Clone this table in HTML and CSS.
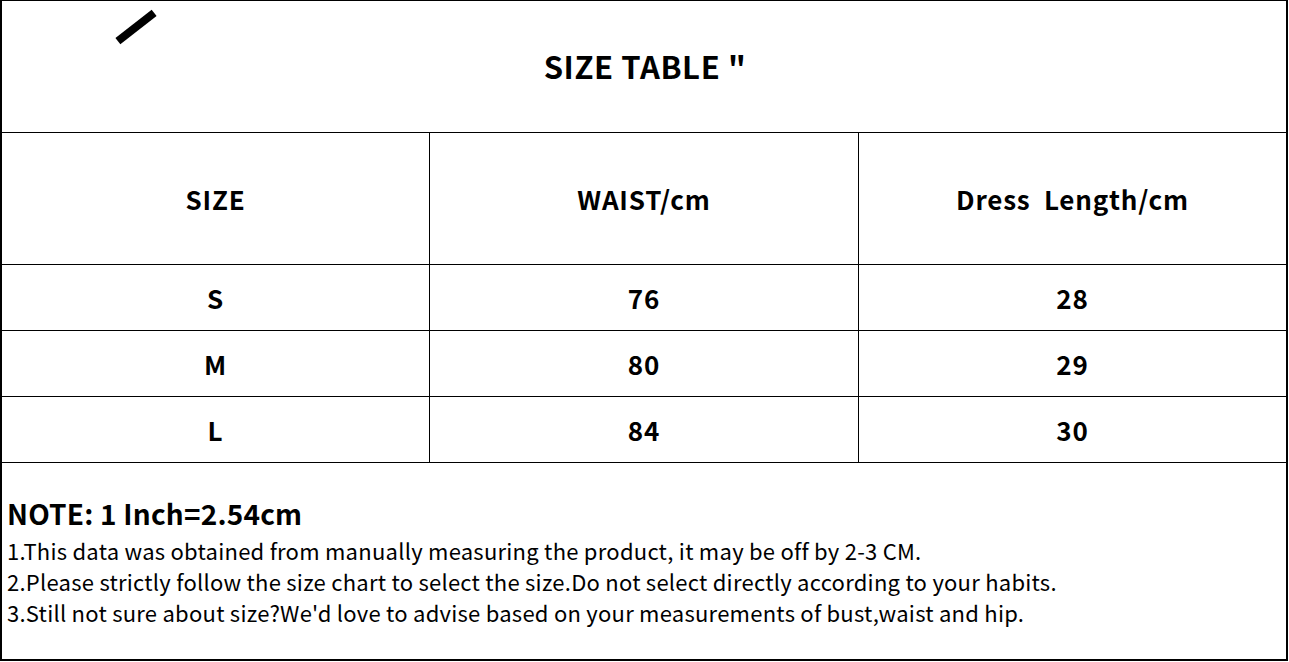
FILE: index.html
```html
<!DOCTYPE html>
<html>
<head>
<meta charset="utf-8">
<link rel="stylesheet" href="styles.css">
</head>
<body>
<div class="sheet">
  <div class="title">
    <span class="mark"></span>
    <h1>SIZE TABLE "</h1>
  </div>
  <div class="table">
    <div class="cell head">SIZE</div>
    <div class="cell head">WAIST/cm</div>
    <div class="cell head last">Dress&nbsp;&nbsp;Length/cm</div>
    <div class="cell">S</div>
    <div class="cell">76</div>
    <div class="cell last">28</div>
    <div class="cell">M</div>
    <div class="cell">80</div>
    <div class="cell last">29</div>
    <div class="cell">L</div>
    <div class="cell">84</div>
    <div class="cell last">30</div>
  </div>
  <div class="notes">
    <h2>NOTE: 1 Inch=2.54cm</h2>
    <p>1.This data was obtained from manually measuring the product, it may be off by 2-3 CM.</p>
    <p>2.Please strictly follow the size chart to select the size.Do not select directly according to your habits.</p>
    <p>3.Still not sure about size?We'd love to advise based on your measurements of bust,waist and hip.</p>
  </div>
</div>
</body>
</html>
```
FILE: styles.css
```css
html, body {
  margin: 0;
  padding: 0;
  background: #fff;
}
body {
  font-family: "Noto Sans CJK SC", "Noto Sans", sans-serif;
  color: #000;
}
.sheet {
  width: 1284px;
  height: 658px;
  border-left: 2px solid #000;
  border-right: 2px solid #000;
  border-top: 1px solid #000;
  border-bottom: 2px solid #000;
  display: flex;
  flex-direction: column;
}
.title {
  position: relative;
  height: 131px;
  border-bottom: 1px solid #000;
  display: flex;
  align-items: center;
  justify-content: center;
}
.title h1 {
  margin: 0;
  font-size: 31px;
  font-weight: 700;
  letter-spacing: 0.6px;
  padding-bottom: 2px;
  padding-left: 2px;
}
.mark {
  position: absolute;
  left: 111px;
  top: 22px;
  width: 46px;
  height: 8px;
  background: #000;
  transform: rotate(-38deg);
}
.table {
  display: grid;
  grid-template-columns: 428px 429px 427px;
  grid-template-rows: 132px 66px 66px 66px;
}
.cell {
  border-right: 1px solid #000;
  border-bottom: 1px solid #000;
  display: flex;
  align-items: center;
  justify-content: center;
  font-size: 26px;
  font-weight: 700;
  letter-spacing: 0.8px;
}
.cell.head {
  align-items: flex-start;
  padding-top: 47px;
  height: 84px;
}
.cell.last {
  border-right: none;
}
.notes {
  flex: 1;
  padding: 31px 0 0 5px;
}
.notes h2 {
  margin: 0 0 3px;
  font-size: 28px;
  font-weight: 700;
  line-height: 38px;
  letter-spacing: 0.2px;
}
.notes p {
  margin: 0;
  font-size: 22px;
  line-height: 31px;
  letter-spacing: 0.25px;
}
```
